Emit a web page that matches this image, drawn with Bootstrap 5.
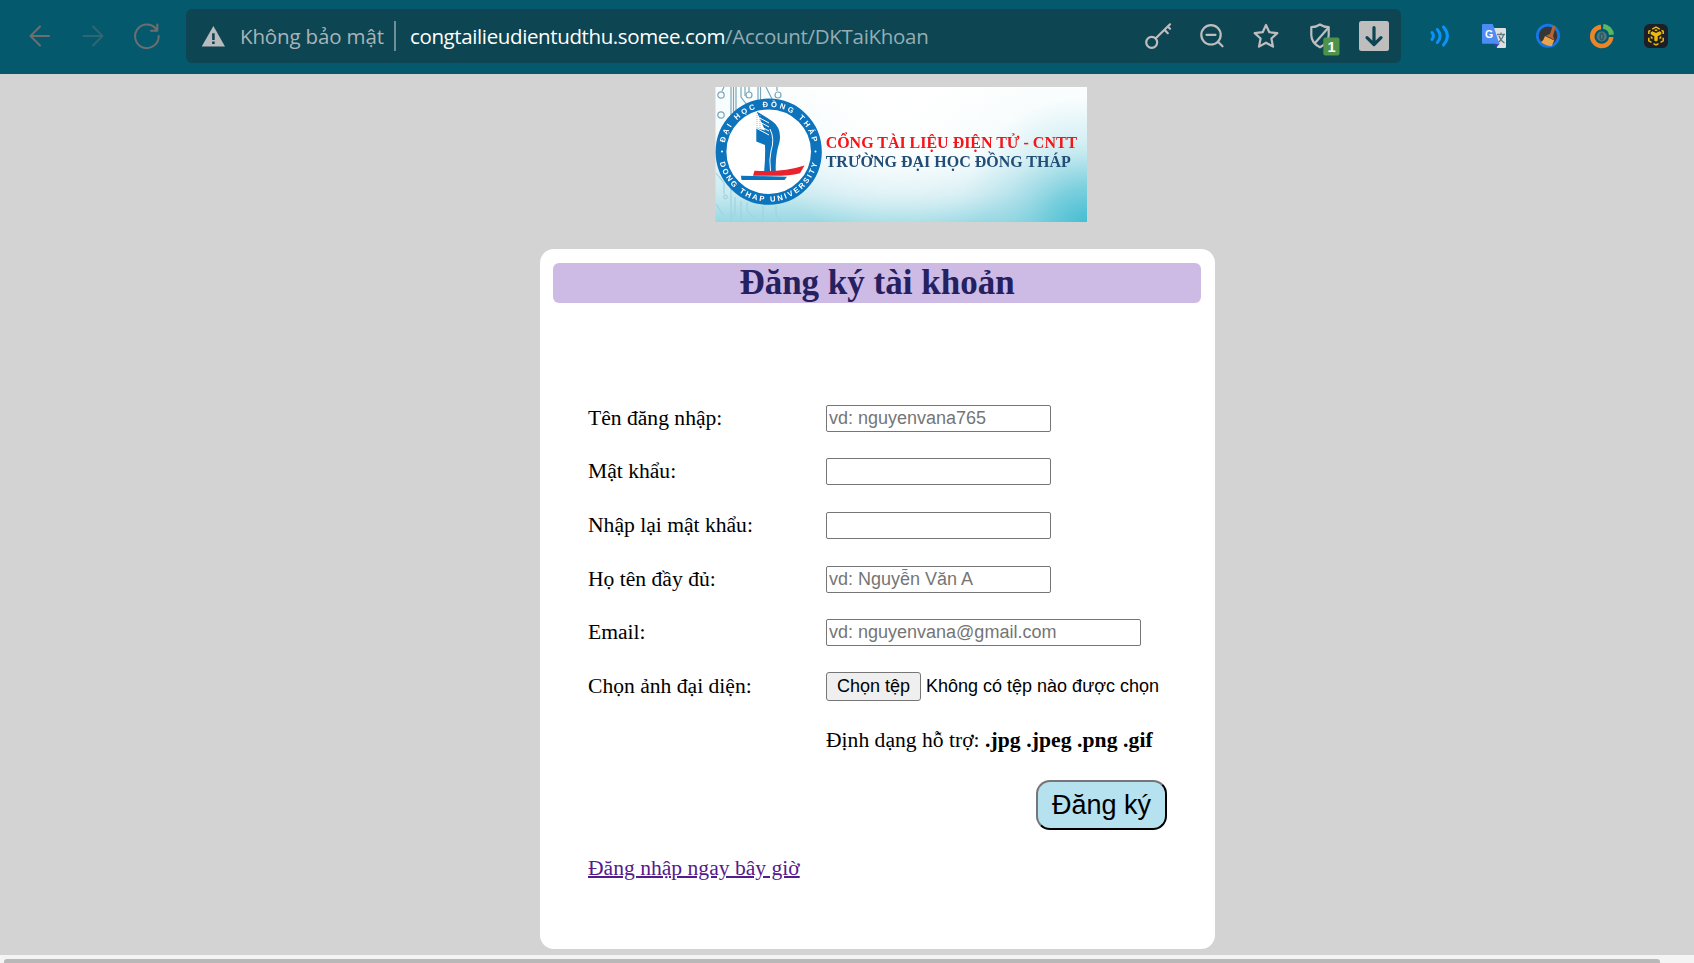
<!DOCTYPE html>
<html lang="vi">
<head>
<meta charset="utf-8">
<title>Đăng ký tài khoản</title>
<link rel="stylesheet" href="https://cdn.jsdelivr.net/npm/bootstrap@5.3.0/dist/css/bootstrap.min.css">
<style>
html{height:100%;overflow:hidden}
body{background:#d3d3d3;color:#000;font:21.6px/25px "Liberation Serif",serif;height:100%;overflow:hidden}
.toolbar{height:74px;background:#045a6c;padding:9px 11px 11px 12px}
.toolbar svg{width:54px;height:54px;flex:none;display:block}
.address{height:54px;width:1215px;margin:0 12px;background:#0e4552;border-radius:6px;font:20.5px/54px "Open Sans","Noto Sans",sans-serif;white-space:nowrap;color:#a9b4b8}
.insecure{width:154px;letter-spacing:-.15px}
.divider{width:2px;height:30px;background:#6e8f98;margin-right:14px}
.host{color:#fff;letter-spacing:-.38px}
.path{color:#93adb4;letter-spacing:-.3px}
.banner{width:372px;height:135px;margin:13px 0 27px 715px;display:block}
.signup{width:675px;height:700px;margin-left:540px;background:#fff;border-radius:14px;padding:14px 14px 0 13px}
.signup h1{height:40px;margin:0 0 88.4px;background:#cdbae5;color:#25205f;border-radius:6px;font-size:35px;font-weight:700;line-height:39px}
.fields{padding-left:35px;padding-right:34px}
.field{height:53.7px;display:grid;grid-template-columns:238px 1fr;align-items:center;white-space:nowrap}
.field input{width:225px;height:27px;border:1px solid #767676;border-radius:2px;padding:1px 2px;font:18px/21px "Liberation Sans",sans-serif;background:#fff}
.field input::placeholder{color:#757575;opacity:1}
.field input.wide{width:315px}
.picker{font:18px/21px "Liberation Sans",sans-serif}
.picker button{width:95px;height:29px;padding:0;border:1px solid #767676;border-radius:3px;background:#efefef;color:#000;margin-right:5px}
.formats b{letter-spacing:.08px}
.send{padding-top:12.6px;margin-bottom:26.6px}
.submit{width:131px;height:50px;padding:0;border:2px outset #767676;border-color:#767676 #212121 #212121 #767676;border-radius:14px;background:#b6e1ee;color:#000;font:27px/44px "Liberation Sans",sans-serif}
.login{color:#551a8b;text-decoration-thickness:2px}
.scroll{height:8px;background:#f4f4f4;margin-top:6px;padding:4px 34px 0 4px}
.thumb{height:10px;background:#b8b8b8;border-radius:3px}
</style>
<script src="https://cdn.jsdelivr.net/npm/bootstrap@5.3.0/dist/js/bootstrap.bundle.min.js"></script>
</head>
<body>
<header class="toolbar d-flex align-items-center">
  <svg viewBox="0 0 54 54" fill="none" stroke="#706d70" stroke-width="2" stroke-linecap="round" stroke-linejoin="round"><path d="M37 27H18.500M28 17.500 18.500 27 28 36.500"/></svg>
  <svg viewBox="0 0 54 54" fill="none" stroke="#2f6673" stroke-width="2" stroke-linecap="round" stroke-linejoin="round"><path d="M17.500 27H36.500M27 17.500 36.500 27 27 36.500"/></svg>
  <svg viewBox="0 0 54 54" fill="none" stroke="#706d70" stroke-width="2" stroke-linecap="round" stroke-linejoin="round"><path d="M38.700 27A11.800 11.800 0 1 1 35.500 19.200L37 21.500M37.300 15.500V21.700H31"/></svg>
  <div class="address d-flex align-items-center">
    <svg viewBox="0 0 54 54"><path fill="#b8bcbe" d="M27.400 17 39 37.500H15.700Z"/><path stroke="#0e4552" stroke-width="2.600" d="M27.400 24.300V31M27.400 32.500V35"/></svg>
    <span class="insecure">Không bảo mật</span><span class="divider flex-shrink-0"></span>
    <span class="host">congtailieudientudthu.somee.com</span><span class="path">/Account/DKTaiKhoan</span>
    <div class="d-flex ms-auto">
      <svg viewBox="0 0 54 54" fill="none" stroke="#bebebe" stroke-width="2.200" stroke-linejoin="round" stroke-linecap="round"><circle cx="20.700" cy="33.300" r="5.500"/><path d="M24.800 29.200 39 15.300M33.500 20.800 36.800 24.200M36.800 17.500 39 19.800"/></svg>
      <svg viewBox="0 0 54 54" fill="none" stroke="#bebebe" stroke-width="2.200" stroke-linecap="round"><circle cx="26" cy="25.800" r="9.700"/><path d="M21.500 25.800H30.500M33 32.800 37.500 37.300"/></svg>
      <svg viewBox="0 0 54 54" fill="none" stroke="#bebebe" stroke-width="2.200" stroke-linejoin="round"><path d="M27 16 30.300 23.200 38.300 24.100 32.400 29.500 34 37.600 27 33.700 20 37.600 21.600 29.500 15.700 24.100 23.700 23.200Z"/></svg>
      <svg viewBox="0 0 54 54" fill="none" stroke="#bebebe" stroke-width="2.200" stroke-linejoin="round"><path d="M27 15.500C24.500 17.300 21.500 18 18.300 18V26C18.300 31.500 21.500 35.500 27 38.300 32.500 35.500 35.700 31.500 35.700 26V18C32.500 18 29.500 17.300 27 15.500ZM35.500 18.500 21.800 34.200"/><rect x="30.300" y="28.600" width="16.200" height="17.800" rx="2" fill="#4f9249" stroke="none"/><text x="38.500" y="43" text-anchor="middle" fill="#fff" stroke="none" font-family="Liberation Sans" font-weight="700" font-size="14.500">1</text></svg>
      <svg viewBox="0 0 54 54"><rect x="12" y="12" width="30" height="30" rx="2.500" fill="#bebebe"/><path d="M27 18.500V35M20 28.700 27 35.500 34 28.700" fill="none" stroke="#0e4552" stroke-width="3.200" stroke-linecap="round" stroke-linejoin="round"/></svg>
    </div>
  </div>
  <svg viewBox="0 0 54 54" fill="none" stroke="#0b93fb" stroke-width="3" stroke-linecap="round"><path d="M19 23.500Q21.800 27 19 30.500M24.300 20.500Q30 27 24.300 33.500M30.500 18Q38.300 27 30.500 36"/></svg>
  <svg viewBox="0 0 54 54"><path fill="#dedfe0" d="M25 19H38Q39 19 39 20V38Q39 39 38 39H30Z"/><path d="M30 25.500H38M34 23.500V25.500M36.700 25.500Q35 31 30.500 34M32 27Q34 32 37.500 34" stroke="#607b86" stroke-width="1.300" fill="none"/><path fill="#3a43ad" d="M27 34.500H32.700L29 39Z"/><path fill="#4d8cf5" d="M16 15H25.800L32.300 34.700H16Q15 34.700 15 33.700V16Q15 15 16 15Z"/><text x="18" y="28.800" fill="#fff" font-family="Liberation Sans" font-weight="700" font-size="10.500">G</text></svg>
  <svg viewBox="0 0 54 54"><circle cx="27" cy="26.800" r="10.700" fill="#383536" stroke="#1877e8" stroke-width="2.700"/><path fill="#b5652e" d="M31.500 17.500Q34 15.800 34.500 18L32 27 33.500 31 25 26.500 29 25Z"/><path fill="#e7a64c" d="M24 27 33.200 31.500 30.500 37.300Q23 36.500 20 33Q23 31 24 27Z"/></svg>
  <svg viewBox="0 0 54 54" fill="none"><circle cx="26.700" cy="27.500" r="5" fill="#52767c"/><ellipse cx="26.700" cy="27.500" rx="1.600" ry="3.300" stroke="#2b5960" stroke-width="1.300"/><path d="M26 18A9.500 9.500 0 1 0 36.200 28" stroke="#ed8528" stroke-width="4.500"/><path d="M28.200 17.200A9.500 9.500 0 0 1 36.500 25.700" stroke="#58b765" stroke-width="5"/></svg>
  <svg viewBox="0 0 54 54"><rect x="15" y="15" width="24" height="24" rx="5.500" fill="#1c2026"/><g fill="none" stroke="#efb90c" stroke-width="1.500"><path d="M23.200 20.200 27 18.200 30.800 20.200M19.800 25V22.300L21.500 21.300M34.200 25V22.300L32.500 21.300M19.800 28.800V31.800L22.500 33.300M34.200 28.800V31.800L31.500 33.300M24.500 34.600 27 35.900 29.500 34.600"/></g><path fill="#efb90c" d="M23.500 22.200 27 24 30.500 22.200 32.300 23.200V25.300L28.700 27.300V31.500L27 32.500 25.300 31.500V27.300L21.700 25.300V23.200ZM21.700 27 23.500 28V30.300L21.700 29.300ZM32.300 27 30.500 28V30.300L32.300 29.300ZM25.200 21.200 27 20.200 28.800 21.200 27 22.200Z"/></svg>
</header>

<svg class="banner" viewBox="0 0 372 135">
  <defs>
    <linearGradient id="sky" x1="0" y1="0" x2="0" y2="1"><stop offset="0" stop-color="#fbfefe"/><stop offset=".5" stop-color="#eef9fb"/><stop offset=".8" stop-color="#c8e9f0"/><stop offset="1" stop-color="#98d8e3"/></linearGradient>
    <radialGradient id="corner" gradientUnits="userSpaceOnUse" cx="372" cy="140" r="130"><stop offset="0" stop-color="#40bcd1"/><stop offset=".3" stop-color="#5fc6d7" stop-opacity=".75"/><stop offset=".65" stop-color="#8fd5e1" stop-opacity=".3"/><stop offset="1" stop-color="#a5dde7" stop-opacity="0"/></radialGradient>
    <radialGradient id="glow" gradientUnits="userSpaceOnUse" cx="185" cy="15" r="145"><stop offset="0" stop-color="#fff"/><stop offset=".4" stop-color="#fff" stop-opacity=".7"/><stop offset="1" stop-color="#fff" stop-opacity="0"/></radialGradient>
    <filter id="soft"><feGaussianBlur stdDeviation=".4"/></filter>
    <path id="arcTop" d="M8.900 64.700A44.800 44.800 0 0 1 98.500 64.700"/>
    <path id="arcBottom" d="M3.700 64.700A50 50 0 0 0 103.700 64.700"/>
  </defs>
  <rect x=".5" width="371.500" height="135" fill="url(#sky)"/><rect x=".5" width="371.500" height="135" fill="url(#glow)"/><rect x=".5" width="371.500" height="135" fill="url(#corner)"/>
  <g fill="none" stroke="#7ba6b9" stroke-width="1.200" filter="url(#soft)">
    <path d="M9 0 7 4M16 0V36L9 46 4 57M18.500 0V28M21 0V24M26 0V10L32 18M30 0V9M34 0V5M43 0V16M45.500 0V14M51 0 57 12M62 0V4"/>
    <circle cx="6" cy="8" r="3.200"/><circle cx="34" cy="8" r="3"/><circle cx="63" cy="8" r="3"/><circle cx="6" cy="28" r="3.200"/>
    <path stroke="#9fd4e0" d="M1 86 9 96V107M16 101V135M20 110V127L15 132M26 114V135M32 116V124L40 132M1 117 8 128M48 119V135M61 119V127L66 135"/><circle cx="10.500" cy="110" r="1.800" stroke="#9fd4e0"/>
  </g>
  <g filter="url(#soft)">
    <circle cx="53.700" cy="64.700" r="47.700" fill="#fff" stroke="#0873bd" stroke-width="10.800"/>
    <g fill="#fff" font-family="Liberation Sans" font-weight="700" font-size="7.600">
      <text><textPath href="#arcTop" startOffset="9" textLength="122">ĐẠI HỌC ĐỒNG THÁP</textPath></text>
      <text><textPath href="#arcBottom" startOffset="11" textLength="134">DONG THAP UNIVERSITY</textPath></text>
    </g>
    <circle cx="7" cy="64.500" r="1" fill="#fff"/><circle cx="100.500" cy="64.500" r="1" fill="#fff"/>
    <path fill="#0873bd" d="M41.700 24.500Q53 31 57 34Q67 41 64.500 55Q60 69 60.800 84H49.200Q50.500 70 50 58L41.300 54.500V41L50 43.500 53 50Z"/>
    <path stroke="#fff" stroke-width="1" fill="none" d="M41 29 54 36M41 33 54 40M41 37 54 44M41 41 54 48M55 42Q60 52 56 64 54 72 55.500 84"/>
    <path stroke="#8cbfe1" stroke-width="1" stroke-dasharray="1 1" d="M42 26V42M45 28V42"/>
    <path fill="#e9202d" d="M39.500 83.700Q68 85.500 89.500 78.500L85 86.200Q74 88.800 60 88.800H38Z"/><path fill="#0873bd" d="M26 88.700 72 89.700 69.500 92.900H26.500Z"/>
  </g>
  <g font-family="Liberation Serif" font-weight="700" font-size="16.500" filter="url(#soft)"><text x="110.700" y="61" fill="#f51216" textLength="251.500" lengthAdjust="spacingAndGlyphs">CỔNG TÀI LIỆU ĐIỆN TỬ - CNTT</text><text x="110.700" y="80.300" fill="#244d77" textLength="245" lengthAdjust="spacingAndGlyphs">TRƯỜNG ĐẠI HỌC ĐỒNG THÁP</text></g>
</svg>

<main class="signup">
  <h1 class="text-center">Đăng ký tài khoản</h1>
  <form class="fields">
    <div class="field"><label for="user">Tên đăng nhập:</label><input id="user" placeholder="vd: nguyenvana765"></div>
    <div class="field"><label for="pass">Mật khẩu:</label><input id="pass" type="password"></div>
    <div class="field"><label for="again">Nhập lại mật khẩu:</label><input id="again" type="password"></div>
    <div class="field"><label for="full">Họ tên đầy đủ:</label><input id="full" placeholder="vd: Nguyễn Văn A"></div>
    <div class="field"><label for="mail">Email:</label><input id="mail" class="wide" placeholder="vd: nguyenvana@gmail.com"></div>
    <div class="field"><span>Chọn ảnh đại diện:</span><div class="picker d-flex align-items-center"><button type="button">Chọn tệp</button><span>Không có tệp nào được chọn</span></div></div>
    <div class="field formats"><span></span><span>Định dạng hỗ trợ: <b>.jpg .jpeg .png .gif</b></span></div>
    <div class="send d-flex justify-content-end"><button type="button" class="submit">Đăng ký</button></div>
    <a class="login d-inline-block" href="#">Đăng nhập ngay bây giờ</a>
  </form>
</main>
<div class="scroll overflow-hidden"><div class="thumb"></div></div>
</body>
</html>
